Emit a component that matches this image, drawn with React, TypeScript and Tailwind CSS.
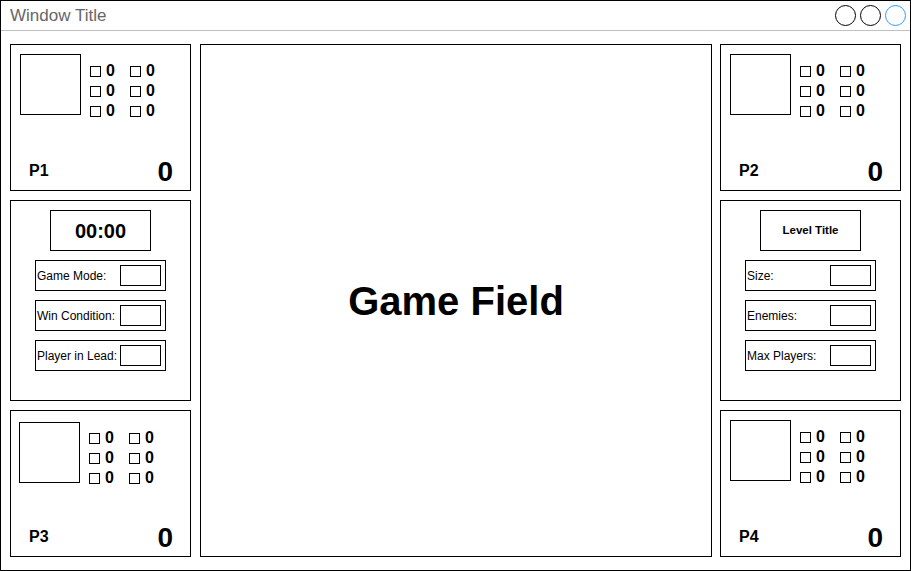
const FONT = 'font-["Liberation_Sans",Arial,sans-serif]'

type PlayerProps = {
  label: string
  avatarClass: string
  gridClass: string
}

function ScoreCell() {
  return (
    <div className="flex h-[20px] items-center gap-[5px]">
      <div className="h-[11px] w-[11px] border border-black" />
      <span className="text-[16px] font-bold leading-[20px] text-black">0</span>
    </div>
  )
}

function PlayerCard({ label, avatarClass, gridClass }: PlayerProps) {
  return (
    <div className="flex h-[147px] w-[181px] flex-col justify-between border border-black">
      <div className="flex items-start">
        <div className={`h-[61px] w-[61px] shrink-0 border border-black ${avatarClass}`} />
        <div className={`ml-[9px] grid grid-cols-[40px_40px] ${gridClass}`}>
          {Array.from({ length: 6 }).map((_, i) => (
            <ScoreCell key={i} />
          ))}
        </div>
      </div>
      <div className="flex items-end justify-between pb-[4px] pl-[18px] pr-[17px]">
        <span className="mb-[7px] text-[16px] font-bold leading-none text-black">{label}</span>
        <span className="text-[28px] font-bold leading-none text-black">0</span>
      </div>
    </div>
  )
}

function InfoRow({ label }: { label: string }) {
  return (
    <div className="flex h-[31px] w-[131px] items-center justify-between border border-black pl-[1px] pr-[4px]">
      <span className="whitespace-nowrap text-[12px] text-black">{label}</span>
      <div className="h-[21px] w-[41px] shrink-0 border border-black" />
    </div>
  )
}

function InfoPanel({ heading, rows, big }: { heading: string; rows: string[]; big?: boolean }) {
  return (
    <div className="flex h-[201px] w-[181px] flex-col items-center gap-[9px] border border-black pt-[9px]">
      <div className="flex h-[41px] w-[101px] items-center justify-center border border-black">
        <span className={big ? 'text-[20px] font-bold text-black' : 'text-[11.5px] font-bold text-black'}>
          {heading}
        </span>
      </div>
      {rows.map((r) => (
        <InfoRow key={r} label={r} />
      ))}
    </div>
  )
}

export default function App() {
  return (
    <div className={`h-[571px] w-[911px] border border-black bg-white ${FONT}`}>
      {/* title bar */}
      <div className="flex h-[30px] items-center justify-between border-b border-[#c0c0c0] pl-[9px] pr-[4px]">
        <span className="text-[17px] leading-none text-[#666666]">Window Title</span>
        <div className="flex items-center gap-[4px]">
          <div className="h-[21px] w-[21px] rounded-full border border-black" />
          <div className="h-[21px] w-[21px] rounded-full border border-black" />
          <div className="h-[21px] w-[21px] rounded-full border border-[#3399ff]" />
        </div>
      </div>

      {/* body */}
      <div className="flex pl-[9px] pt-[13px]">
        <div className="flex w-[181px] flex-col gap-[9px]">
          <PlayerCard label="P1" avatarClass="ml-[9px] mt-[9px]" gridClass="mt-[16px]" />
          <InfoPanel heading="00:00" big rows={['Game Mode:', 'Win Condition:', 'Player in Lead:']} />
          <PlayerCard label="P3" avatarClass="ml-[8px] mt-[11px]" gridClass="mt-[17px]" />
        </div>

        <div className="ml-[9px] flex h-[513px] w-[512px] items-center justify-center border border-black">
          <span className="text-[40px] font-bold text-black">Game Field</span>
        </div>

        <div className="ml-[8px] flex w-[181px] flex-col gap-[9px]">
          <PlayerCard label="P2" avatarClass="ml-[9px] mt-[9px]" gridClass="mt-[16px]" />
          <InfoPanel heading="Level Title" rows={['Size:', 'Enemies:', 'Max Players:']} />
          <PlayerCard label="P4" avatarClass="ml-[9px] mt-[9px]" gridClass="mt-[16px]" />
        </div>
      </div>
    </div>
  )
}
